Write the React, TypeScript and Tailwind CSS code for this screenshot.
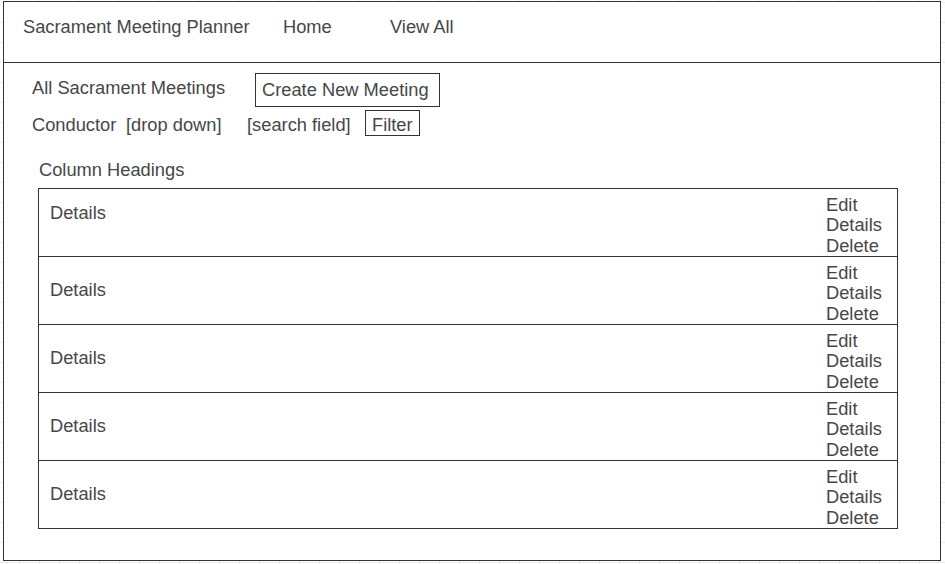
import React from "react";

const rows = [0, 1, 2, 3, 4];

export default function App() {
  return (
    <div className="w-[945px] h-[564px] overflow-hidden bg-white bg-[linear-gradient(to_right,#ececec_1px,transparent_1px),linear-gradient(to_bottom,#ececec_1px,transparent_1px)] bg-[size:20px_20px] bg-[position:19px_2px] pt-[1px] pl-[3px] font-['Liberation_Sans',Arial,sans-serif] text-[18.3px] leading-[20.5px] text-[#474747]">
      <div className="w-[938px] h-[560px] border border-[#333333] bg-white flex flex-col">
        {/* Header */}
        <div className="h-[61px] shrink-0 border-b border-[#333333] flex items-start pl-[19px] pt-[15px]">
          <span className="w-[260px] whitespace-nowrap">Sacrament Meeting Planner</span>
          <span className="w-[107px] whitespace-nowrap">Home</span>
          <span className="whitespace-nowrap">View All</span>
        </div>

        {/* Main */}
        <div className="flex flex-col pl-[28px]">
          <div className="flex items-start mt-[10px]">
            <span className="w-[223px] mt-[5px] whitespace-nowrap">All Sacrament Meetings</span>
            <div className="w-[185px] h-[34px] border border-[#333333] flex items-center pl-[6px] whitespace-nowrap">
              Create New Meeting
            </div>
          </div>

          <div className="flex items-start mt-[3px]">
            <span className="w-[94px] mt-[5px] whitespace-nowrap">Conductor</span>
            <span className="w-[121px] mt-[5px] whitespace-nowrap">[drop down]</span>
            <span className="w-[118px] mt-[5px] whitespace-nowrap">[search field]</span>
            <div className="w-[55px] h-[26px] overflow-visible border border-[#333333] pl-[6px] pt-[4px] leading-[19px] whitespace-nowrap">
              Filter
            </div>
          </div>

          <div className="ml-[7px] mt-[24px] whitespace-nowrap">Column Headings</div>

          <div className="ml-[6px] mt-[7px] w-[860px] border border-[#333333] flex flex-col">
            {rows.map((i) => (
              <div
                key={i}
                className={
                  i === 0
                    ? "h-[67px] flex"
                    : "h-[68px] flex border-t border-[#333333]"
                }
              >
                <div
                  className={
                    i === 0
                      ? "flex-1 pl-[11px] pt-[14px]"
                      : "flex-1 pl-[11px] flex items-center"
                  }
                >
                  Details
                </div>
                <div className="w-[71px] pt-[6px] flex flex-col whitespace-nowrap">
                  <span>Edit</span>
                  <span>Details</span>
                  <span>Delete</span>
                </div>
              </div>
            ))}
          </div>
        </div>
      </div>
    </div>
  );
}
